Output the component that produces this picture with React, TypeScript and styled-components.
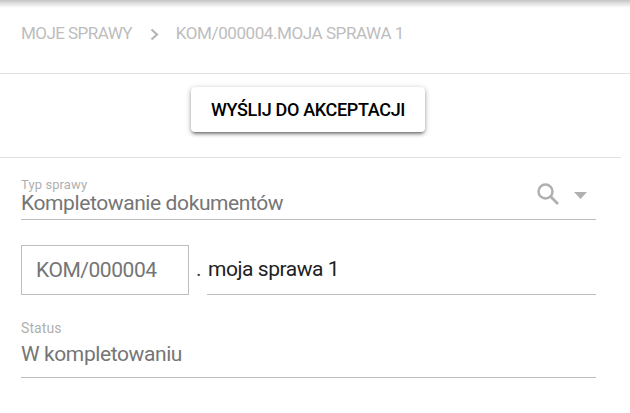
import React from 'react';
import styled, { createGlobalStyle } from 'styled-components';

const GlobalStyle = createGlobalStyle`
  html, body {
    margin: 0;
    padding: 0;
    background: #fff;
    font-family: Roboto, "Liberation Sans", sans-serif;
  }
`;

const Page = styled.div`
  width: 630px;
  height: 413px;
  overflow: hidden;
  position: relative;
`;

const TopShadow = styled.div`
  height: 8px;
  background: linear-gradient(to bottom, #c4c4c4, #e2e2e2 45%, #ffffff);
`;

const Breadcrumbs = styled.nav`
  height: 66px;
  box-sizing: border-box;
  padding: 16px 0 0 21px;
  display: flex;
  align-items: flex-start;
  border-bottom: 1px solid #e0e0e0;
  font-size: 17px;
  line-height: 19px;
  letter-spacing: -0.55px;
  color: #bdbdbd;
`;

const Crumb = styled.span`
  white-space: nowrap;
`;

const Chevron = styled.svg`
  width: 12px;
  height: 13px;
  margin: 4px 15px 0 17px;
  flex: none;
`;

const CrumbCurrent = styled(Crumb)`
  letter-spacing: -0.42px;
`;

const Toolbar = styled.div`
  height: 84px;
  width: 621px;
  box-sizing: border-box;
  padding-top: 13px;
  padding-left: 191px;
  border-bottom: 1px solid #e0e0e0;
`;

const ActionButton = styled.button`
  width: 234px;
  height: 45px;
  border: 0;
  border-radius: 4px;
  background: #fff;
  color: #000;
  font-family: inherit;
  font-size: 18px;
  font-weight: 500;
  letter-spacing: -0.33px;
  box-shadow: 0 3px 3px -2px rgba(0, 0, 0, 0.4), 0 2px 4px 0 rgba(0, 0, 0, 0.3), 0 1px 6px 0 rgba(0, 0, 0, 0.12);
`;

const Form = styled.div`
  width: 575px;
  margin-left: 21px;
  padding-top: 20px;
`;

const Field = styled.div`
  position: relative;
  height: 41px;
  border-bottom: 1px solid #bdbdbd;
`;

const Label = styled.div`
  font-size: 13px;
  line-height: 14px;
  letter-spacing: 0.1px;
  color: #b0b0b0;
`;

const Value = styled.div`
  font-size: 21px;
  line-height: 24px;
  letter-spacing: -0.4px;
  color: #757575;
`;

const TypeValue = styled(Value)`
  margin-top: -1px;
`;

const FieldIcons = styled.div`
  position: absolute;
  right: 9px;
  top: 5px;
  display: flex;
  align-items: center;
  gap: 15px;
`;

const NumberRow = styled.div`
  display: flex;
  margin-top: 25px;
  height: 50px;
`;

const NumberBox = styled.div`
  width: 168px;
  box-sizing: border-box;
  border: 1px solid #bdbdbd;
  padding-left: 14px;
  font-size: 21px;
  line-height: 49px;
  letter-spacing: -0.45px;
  color: #757575;
`;

const Dot = styled.span`
  width: 18px;
  padding-left: 7px;
  box-sizing: border-box;
  font-size: 21px;
  line-height: 49px;
  color: #424242;
`;

const NameField = styled.div`
  flex: 1;
  padding-left: 1px;
  border-bottom: 1px solid #bdbdbd;
  font-size: 21px;
  line-height: 49px;
  letter-spacing: -0.45px;
  color: #212121;
`;

const StatusField = styled(Field)`
  margin-top: 25px;
  height: 57px;
`;

const StatusLabel = styled(Label)`
  font-size: 14px;
  line-height: 16px;
  margin-bottom: 6px;
`;

const Caret = styled.svg`
  margin-top: 3px;
`;

export default function App() {
  return (
    <Page>
      <GlobalStyle />
      <TopShadow />
      <Breadcrumbs>
        <Crumb>MOJE SPRAWY</Crumb>
        <Chevron viewBox="0 0 12 13">
          <path d="M2.5 1.5 L8 6.5 L2.5 11.5" fill="none" stroke="#b5b5b5" strokeWidth="2.2" />
        </Chevron>
        <CrumbCurrent>KOM/000004.MOJA SPRAWA 1</CrumbCurrent>
      </Breadcrumbs>
      <Toolbar>
        <ActionButton>WYŚLIJ DO AKCEPTACJI</ActionButton>
      </Toolbar>
      <Form>
        <Field>
          <Label>Typ sprawy</Label>
          <TypeValue>Kompletowanie dokumentów</TypeValue>
          <FieldIcons>
            <svg width="22" height="22" viewBox="0 0 22 22">
              <circle cx="8.5" cy="8.5" r="7" fill="none" stroke="#b0b0b0" strokeWidth="2.5" />
              <path d="M13.6 13.6 L21 21" stroke="#b0b0b0" strokeWidth="2.8" fill="none" />
            </svg>
            <Caret width="13" height="7" viewBox="0 0 13 7">
              <path d="M0 0 H13 L6.5 7 Z" fill="#b0b0b0" />
            </Caret>
          </FieldIcons>
        </Field>
        <NumberRow>
          <NumberBox>KOM/000004</NumberBox>
          <Dot>.</Dot>
          <NameField>moja sprawa 1</NameField>
        </NumberRow>
        <StatusField>
          <StatusLabel>Status</StatusLabel>
          <Value>W kompletowaniu</Value>
        </StatusField>
      </Form>
    </Page>
  );
}
